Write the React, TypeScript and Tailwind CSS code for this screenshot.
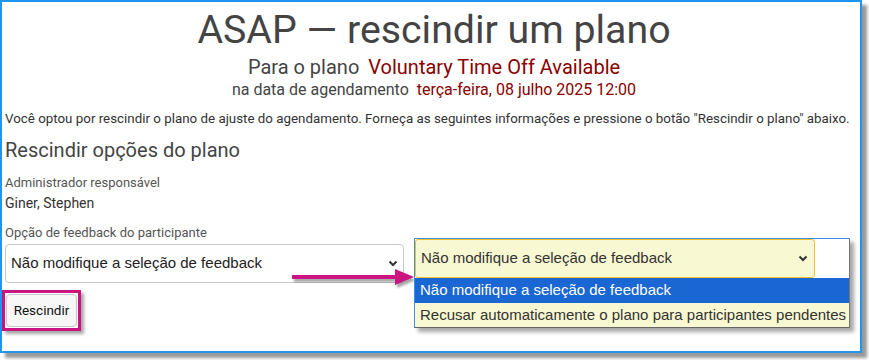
const Chevron = () => (
  <svg width="10" height="7" viewBox="0 0 10 7" className="shrink-0">
    <path d="M1.5 1.5 L5 5 L8.5 1.5" fill="none" stroke="#333" strokeWidth="2" />
  </svg>
);

export default function App() {
  return (
    <div className="w-[869px] h-[360px] bg-white font-['Roboto',sans-serif]">
      <div className="relative w-[862px] h-[353px] border-2 border-[#1e96f0] bg-white shadow-[5px_5px_3px_rgba(0,0,0,0.4)]">
        {/* header */}
        <div className="flex flex-col items-center pl-[6px] text-[#444]">
          <h1 className="mt-[5px] text-[39.3px] leading-[47px]">ASAP — rescindir um plano</h1>
          <div className="mt-px text-[20px] leading-[24px]">
            Para o plano <span className="ml-[4px] text-[#8b0000]">Voluntary Time Off Available</span>
          </div>
          <div className="mt-[2px] text-[16px] leading-[18px]">
            na data de agendamento <span className="ml-[4px] text-[#8b0000]">terça-feira, 08 julho 2025 12:00</span>
          </div>
        </div>

        <div className="flex flex-col items-start pl-[3px] text-[#333]">
          <p className="mt-[12px] text-[13.35px] leading-[16px] whitespace-nowrap">
            Você optou por rescindir o plano de ajuste do agendamento. Forneça as seguintes informações e pressione o botão "Rescindir o plano" abaixo.
          </p>
          <h2 className="mt-[11px] text-[20px] leading-[24px] text-[#444]">Rescindir opções do plano</h2>

          <div className="mt-[13px] text-[13px] leading-[16px] text-[#555]">Administrador responsável</div>
          <div className="mt-[4px] text-[14px] leading-[17px] text-[#333]">Giner, Stephen</div>

          <div className="mt-[13px] text-[13px] leading-[16px] text-[#555]">Opção de feedback do participante</div>
          <div className="mt-[3px] flex h-[39px] w-[399px] items-center justify-between rounded-[4px] border border-[#c8c8c8] bg-white pl-[5px] pr-[5px] font-['Liberation_Sans',Arial,sans-serif] text-[15px] text-[#222]">
            <span>Não modifique a seleção de feedback</span>
            <Chevron />
          </div>

          <div className="-ml-[3px] mt-[7px] border-[3px] border-[#cc1480] p-px shadow-[3px_3px_3px_rgba(0,0,0,0.35)]">
            <button className="flex h-[33px] w-[71px] items-center justify-center rounded-[4px] border border-[#c8c8c8] bg-[#f7f7f7] text-[13.5px] text-[#111]">
              Rescindir
            </button>
          </div>
        </div>

        {/* callout arrow */}
        <svg
          className="absolute left-[290px] top-[265px] drop-shadow-[2px_3px_1px_rgba(0,0,0,0.35)]"
          width="124"
          height="20"
          viewBox="0 0 124 20"
        >
          <rect x="0" y="8" width="106" height="4" fill="#cc1480" />
          <polygon points="103,2 122,10 103,18" fill="#cc1480" />
        </svg>

        {/* opened dropdown */}
        <div className="absolute left-[412px] top-[236px] w-[436px] border border-t-[#3a8ee6] border-l-[#3a8ee6] border-r-[#777] border-b-[#666] bg-white font-['Liberation_Sans',Arial,sans-serif] text-[15px] shadow-[4px_4px_4px_rgba(0,0,0,0.35)]">
          <div className="flex h-[39px] w-[400px] items-center justify-between rounded-[3px] border border-[#f0c030] bg-[#f8f8d2] pl-[5px] pr-[6px] text-[#333]">
            <span>Não modifique a seleção de feedback</span>
            <Chevron />
          </div>
          <div className="flex h-[25px] items-center bg-[#1a66d2] pl-[5px] text-white">Não modifique a seleção de feedback</div>
          <div className="flex h-[24px] items-center whitespace-nowrap bg-[#f8f8d2] pl-[5px] text-[#333]">
            Recusar automaticamente o plano para participantes pendentes
          </div>
        </div>
      </div>
    </div>
  );
}
